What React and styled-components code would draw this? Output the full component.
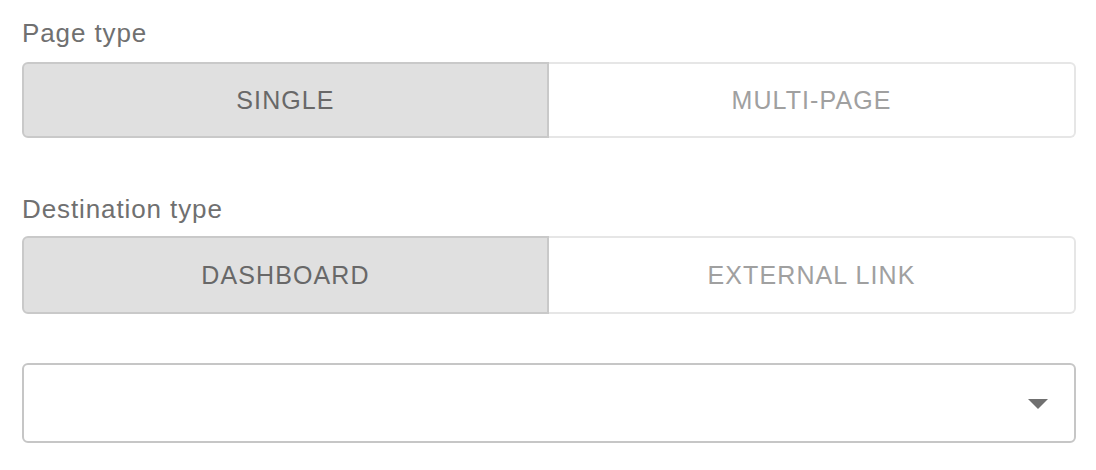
import React, { useState } from "react";
import styled, { createGlobalStyle } from "styled-components";

const Global = createGlobalStyle`
  html, body { margin: 0; padding: 0; background: #ffffff; }
  body { font-family: "Liberation Sans", Arial, Helvetica, sans-serif; }
  * { box-sizing: border-box; }
`;

const Page = styled.div`
  display: flex;
  flex-direction: column;
  padding: 18px 20px 0 22px;
  width: 1096px;
`;

const Field = styled.div`
  display: flex;
  flex-direction: column;
  gap: ${(p) => p.$gap || 15}px;
  margin-bottom: ${(p) => p.$mb || 0}px;
`;

const Label = styled.div`
  font-size: 26px;
  line-height: 30px;
  color: #707070;
  letter-spacing: 0.9px;
`;

const Toggle = styled.div`
  display: grid;
  grid-template-columns: 1fr 1fr;
  height: ${(p) => p.$h}px;
`;

const Option = styled.button`
  font-family: inherit;
  font-size: 25px;
  letter-spacing: 1.1px;
  text-transform: uppercase;
  cursor: pointer;
  margin: 0;
  padding: 0;
  border-style: solid;
  border-width: 2px;
  background: ${(p) => (p.$active ? "#e0e0e0" : "#ffffff")};
  color: ${(p) => (p.$active ? "#686868" : "#a0a0a0")};
  border-color: ${(p) => (p.$active ? "#c9c9c9" : "#e6e6e6")};
  border-radius: ${(p) => (p.$first ? "6px 0 0 6px" : "0 6px 6px 0")};
  ${(p) => (p.$first ? "" : "border-left: none;")}
`;

const Select = styled.div`
  display: flex;
  align-items: center;
  justify-content: flex-end;
  height: 80px;
  border: 2px solid #c6c6c6;
  border-radius: 6px;
  padding-right: 26px;
  margin-top: 49px;
`;

const Arrow = styled.svg`
  width: 20px;
  height: 10px;
  display: block;
  margin-top: 2px;
`;

function ToggleGroup({ options, value, onChange, h }) {
  return (
    <Toggle $h={h}>
      {options.map((o, i) => (
        <Option
          key={o}
          $first={i === 0}
          $active={value === o}
          onClick={() => onChange(o)}
        >
          {o}
        </Option>
      ))}
    </Toggle>
  );
}

export default function App() {
  const [page, setPage] = useState("Single");
  const [dest, setDest] = useState("Dashboard");
  return (
    <>
      <Global />
      <Page>
        <Field $gap={14} $mb={56}>
          <Label>Page type</Label>
          <ToggleGroup
            options={["Single", "Multi-page"]}
            value={page}
            onChange={setPage}
            h={76}
          />
        </Field>
        <Field $gap={12}>
          <Label>Destination type</Label>
          <ToggleGroup
            options={["Dashboard", "External link"]}
            value={dest}
            onChange={setDest}
            h={78}
          />
        </Field>
        <Select>
          <Arrow viewBox="0 0 20 10">
            <path d="M0 0 L20 0 L10 10 Z" fill="#707070" />
          </Arrow>
        </Select>
      </Page>
    </>
  );
}
